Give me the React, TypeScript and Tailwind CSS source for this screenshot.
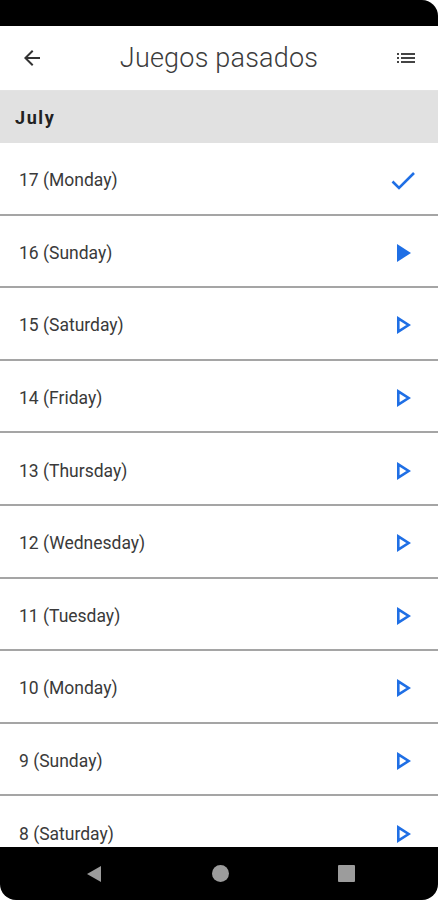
import React from 'react';

const days = [
  { label: '17 (Monday)', state: 'done' },
  { label: '16 (Sunday)', state: 'started' },
  { label: '15 (Saturday)', state: 'open' },
  { label: '14 (Friday)', state: 'open' },
  { label: '13 (Thursday)', state: 'open' },
  { label: '12 (Wednesday)', state: 'open' },
  { label: '11 (Tuesday)', state: 'open' },
  { label: '10 (Monday)', state: 'open' },
  { label: '9 (Sunday)', state: 'open' },
  { label: '8 (Saturday)', state: 'open' },
];

function StateIcon({ state }: { state: string }) {
  if (state === 'done') {
    return (
      <svg width="28" height="28" viewBox="0 0 28 28" fill="none">
        <path d="M3.5 15.5 L10 22 L25 7" stroke="#1f6fe5" strokeWidth="2.6" strokeLinecap="butt" />
      </svg>
    );
  }
  if (state === 'started') {
    return (
      <svg width="28" height="28" viewBox="0 0 28 28">
        <path d="M8 5 L22 14 L8 23 Z" fill="#1f6fe5" />
      </svg>
    );
  }
  return (
    <svg width="28" height="28" viewBox="0 0 28 28" fill="none">
      <path d="M9.3 7.4 L19.6 14 L9.3 20.6 Z" stroke="#1f6fe5" strokeWidth="2.6" strokeLinejoin="miter" />
    </svg>
  );
}

export default function App() {
  return (
    <div className="w-[438px] h-[900px] bg-white overflow-hidden flex flex-col font-['Roboto',sans-serif]">
      <div className="h-[26px] shrink-0 bg-black rounded-tr-[16px]" />

      <div className="h-[65px] shrink-0 flex items-center justify-between px-[20px] border-b border-[#e3e3e3]">
        <svg width="24" height="24" viewBox="0 0 24 24" className="text-[#333]">
          <path d="M20 11H7.83l5.59-5.59L12 4l-8 8 8 8 1.41-1.41L7.83 13H20v-2z" fill="currentColor" />
        </svg>
        <h1 className="text-[27px] font-light text-[#3c3c3c] tracking-[0.2px]">Juegos pasados</h1>
        <svg width="24" height="24" viewBox="0 0 24 24" className="text-[#444]">
          <path d="M3 13h2v-2H3v2zm0 4h2v-2H3v2zm0-8h2V7H3v2zm4 4h14v-2H7v2zm0 4h14v-2H7v2zM7 7v2h14V7H7z" fill="currentColor" />
        </svg>
      </div>

      <div className="h-[52px] shrink-0 bg-[#e1e1e1] flex items-center px-[15px]">
        <span className="text-[18px] font-bold tracking-[1.6px] text-[#222]">July</span>
      </div>

      <div className="flex-1 overflow-hidden">
        {days.map((d) => (
          <div
            key={d.label}
            className="h-[72.6px] flex items-center justify-between pl-[19px] pr-[21px] pt-[4px] border-b-2 border-[#a5a5a5]"
          >
            <span className="text-[17.5px] text-[#3a3a3a]">{d.label}</span>
            <StateIcon state={d.state} />
          </div>
        ))}
      </div>

      <div className="h-[53px] shrink-0 bg-black rounded-b-[16px] flex items-center justify-center gap-[109px] pl-[2px]">
        <svg width="18" height="18" viewBox="0 0 18 18">
          <path d="M16 1 L16 17 L2 9 Z" fill="#9c9c9c" />
        </svg>
        <div className="w-[17px] h-[17px] rounded-full bg-[#9c9c9c]" />
        <div className="w-[17px] h-[17px] rounded-[1px] bg-[#9c9c9c]" />
      </div>
    </div>
  );
}
